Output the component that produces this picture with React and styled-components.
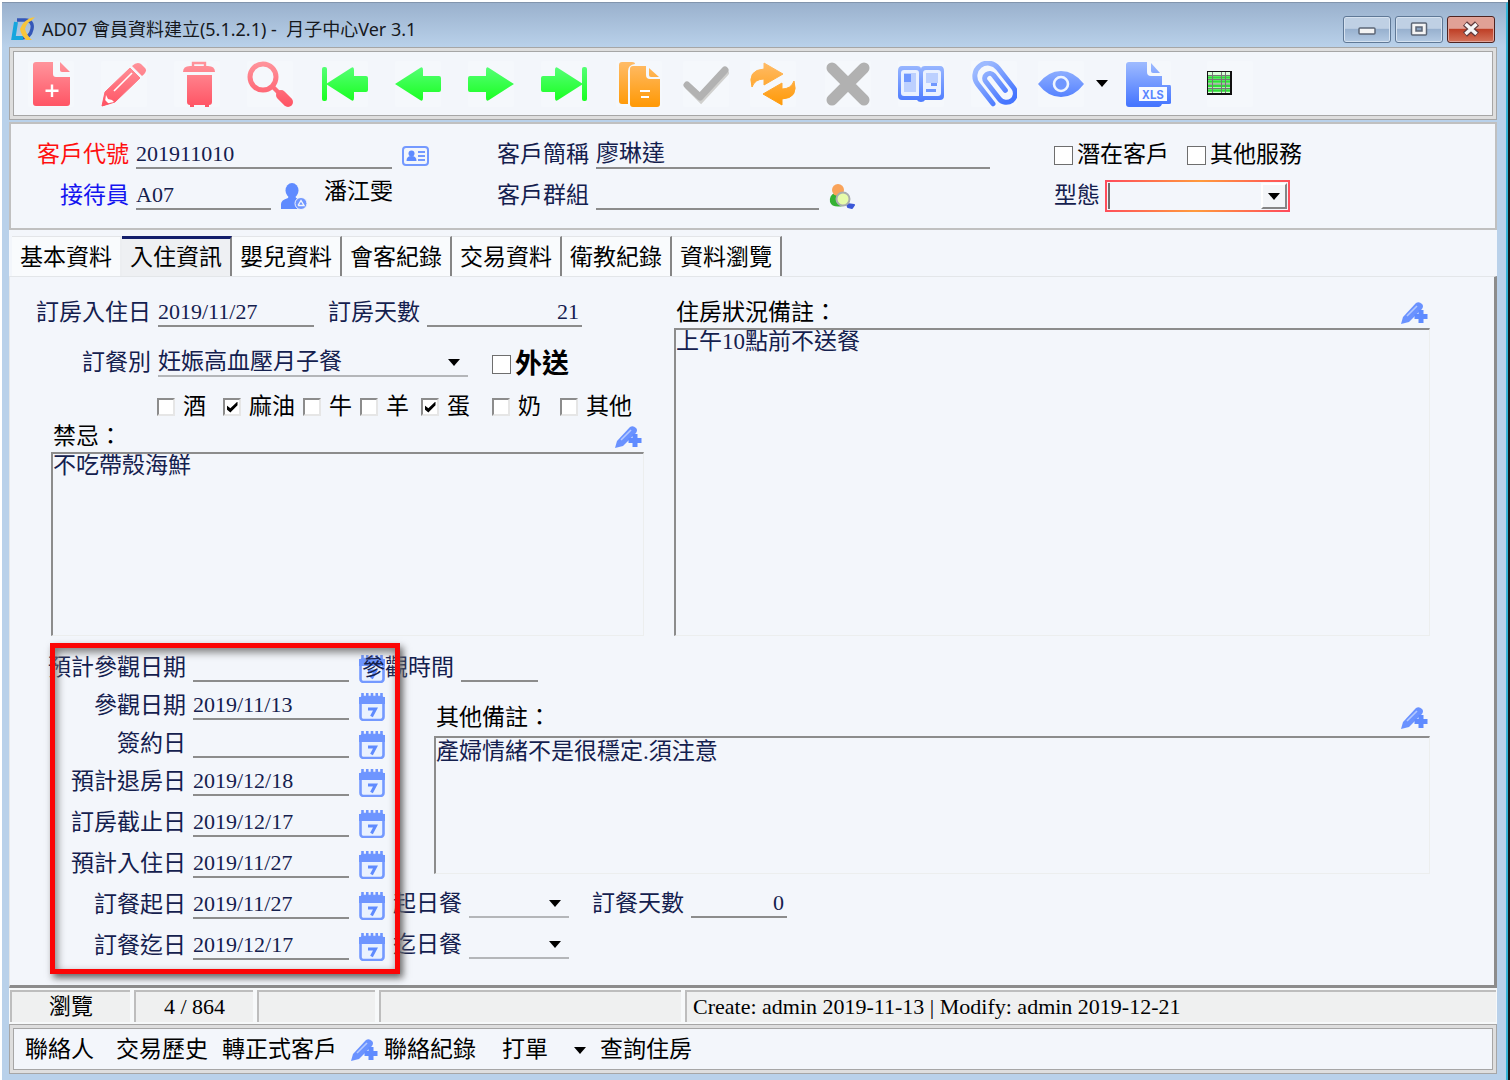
import styled, { createGlobalStyle, css } from "styled-components";

const dates = [
	{ id: "planVisit", label: "預計參觀日期", value: "" },
	{ id: "visit", label: "參觀日期", value: "2019/11/13" },
	{ id: "sign", label: "簽約日", value: "" },
	{ id: "planCheckout", label: "預計退房日", value: "2019/12/18" },
];

const bookingDates = [
	{ id: "roomEnd", label: "訂房截止日", value: "2019/12/17" },
	{ id: "planCheckin", label: "預計入住日", value: "2019/11/27" },
	{ id: "mealStart", label: "訂餐起日", value: "2019/11/27" },
	{ id: "mealEnd", label: "訂餐迄日", value: "2019/12/17" },
];

const tabs = ["基本資料", "入住資訊", "嬰兒資料", "會客紀錄", "交易資料", "衛教紀錄", "資料瀏覽"];

const foods = [
	{ label: "酒" },
	{ label: "麻油", checked: true },
	{ label: "牛" },
	{ label: "羊" },
	{ label: "蛋", checked: true },
	{ label: "奶" },
	{ label: "其他" },
];

export default function App() {
	return (
		<>
			<GlobalStyle />
			<GradientDefs />
			<Desktop>
				<Window>
					<TitleBar>
						<Logo />
						<Title>AD07 會員資料建立(5.1.2.1) -&nbsp; 月子中心Ver 3.1</Title>
						<WindowButtons>
							<WindowButton aria-label="minimize">
								<svg width="20" height="14" viewBox="0 0 20 14">
									<rect x="2" y="6" width="16" height="6" rx="1" fill="#f4f4f4" stroke="#5c6675" strokeWidth="1.5" />
								</svg>
							</WindowButton>
							<WindowButton aria-label="maximize">
								<svg width="20" height="16" viewBox="0 0 20 16">
									<rect x="2.500" y="2" width="15" height="12" rx="1" fill="#f4f4f4" stroke="#5c6675" strokeWidth="1.5" />
									<rect x="7" y="6" width="6" height="4" fill="#8ba3c0" stroke="#5c6675" strokeWidth="1.5" />
								</svg>
							</WindowButton>
							<WindowButton aria-label="close" $danger>
								<svg width="20" height="16" viewBox="0 0 20 16">
									<path d="M4 2.500L16 13.500M16 2.500L4 13.500" stroke="#5f3a3c" strokeWidth="6" />
									<path d="M4.500 3L15.500 13M15.500 3L4.500 13" stroke="#f6f6f6" strokeWidth="3.6" />
								</svg>
							</WindowButton>
						</WindowButtons>
					</TitleBar>

					<Toolbar>
						<ToolGroup>
							<Tool name="new"><FileAddIcon /></Tool>
							<Tool name="edit"><PencilIcon /></Tool>
							<Tool name="delete"><TrashIcon /></Tool>
							<Tool name="search"><SearchIcon /></Tool>
						</ToolGroup>
						<ToolGroup>
							<Tool name="first"><ArrowIcon bar /></Tool>
							<Tool name="previous"><ArrowIcon /></Tool>
							<Tool name="next"><ArrowIcon flip /></Tool>
							<Tool name="last"><ArrowIcon bar flip /></Tool>
						</ToolGroup>
						<ToolGroup $gap={21}>
							<Tool name="copy"><CopyIcon /></Tool>
							<Tool name="save"><CheckIcon /></Tool>
							<Tool name="refresh"><RefreshIcon /></Tool>
						</ToolGroup>
						<ToolGroup $gap={21}>
							<ToolGroup>
								<Tool name="cancel"><CrossIcon /></Tool>
								<Tool name="browse"><BookIcon /></Tool>
								<Tool name="attachment"><ClipIcon /></Tool>
							</ToolGroup>
							<SplitTool>
								<Tool name="view"><EyeIcon /></Tool>
								<CaretButton aria-label="view options"><Caret /></CaretButton>
							</SplitTool>
						</ToolGroup>
						<ToolGroup $gap={36}>
							<Tool name="export xls"><XlsIcon /></Tool>
							<Tool name="sheet"><SheetIcon /></Tool>
						</ToolGroup>
					</Toolbar>

					<Header>
						<HeaderColumn>
							<Row>
								<Label htmlFor="code" $width={118} $color="#ff1010">客戶代號</Label>
								<Field id="code" $width={256} defaultValue="201911010" />
								<IconButton aria-label="customer card"><CardIcon /></IconButton>
							</Row>
							<Row>
								<Label htmlFor="staff" $width={118} $color="#1414f0">接待員</Label>
								<Field id="staff" $width={135} defaultValue="A07" />
								<IconButton aria-label="pick staff"><UserIcon /></IconButton>
								<StaffName>潘江雯</StaffName>
							</Row>
						</HeaderColumn>
						<HeaderColumn>
							<Row>
								<Label htmlFor="short">客戶簡稱</Label>
								<Field id="short" $width={394} $cjk defaultValue="廖琳達" />
							</Row>
							<Row>
								<Label htmlFor="group">客戶群組</Label>
								<Field id="group" $width={223} $cjk defaultValue="" />
								<IconButton aria-label="pick group"><GroupIcon /></IconButton>
							</Row>
						</HeaderColumn>
						<HeaderColumn>
							<CheckRow>
								<CheckLabel><Check type="checkbox" />潛在客戶</CheckLabel>
								<CheckLabel><Check type="checkbox" />其他服務</CheckLabel>
							</CheckRow>
							<Row>
								<Label htmlFor="type">型態</Label>
								<TypeBox>
									<TypeSelect id="type"><option> </option></TypeSelect>
									<TypeArrow><Caret /></TypeArrow>
								</TypeBox>
							</Row>
						</HeaderColumn>
					</Header>

					<TabBar role="tablist">
						{tabs.map((tab) => (
							<Tab key={tab} role="tab" aria-selected={tab === "入住資訊"}>{tab}</Tab>
						))}
					</TabBar>

					<TabPage>
						<Upper>
							<RoomColumn>
								<Row>
									<Label htmlFor="roomStart" $width={141}>訂房入住日</Label>
									<Field id="roomStart" $width={156} defaultValue="2019/11/27" />
									<NextLabel htmlFor="roomDays">訂房天數</NextLabel>
									<Field id="roomDays" $width={155} $right defaultValue="21" />
								</Row>
								<MealRow>
									<Label htmlFor="meal" $width={141}>訂餐別</Label>
									<SelectBox $width={310}>
										<Select id="meal"><option>妊娠高血壓月子餐</option></Select>
										<SelectCaret><Caret /></SelectCaret>
									</SelectBox>
									<DeliveryLabel><Check type="checkbox" />外送</DeliveryLabel>
								</MealRow>
								<FoodRow>
									{foods.map((food) => (
										<FoodLabel key={food.label}>
											<SunkenCheck type="checkbox" defaultChecked={food.checked} />
											{food.label}
										</FoodLabel>
									))}
								</FoodRow>
								<TabooNote>
									<Note id="taboo" label="禁忌：" text="不吃帶殼海鮮" />
								</TabooNote>
							</RoomColumn>
							<Note id="roomNote" label="住房狀況備註：" text="上午10點前不送餐" />
						</Upper>

						<Lower>
							<DateColumn>
								<DateGroup $gap={8}>
									{dates.map((d) => <DateRow key={d.id} {...d} />)}
								</DateGroup>
								<DateGroup $gap={11}>
									{bookingDates.map((d) => <DateRow key={d.id} {...d} />)}
								</DateGroup>
							</DateColumn>
							<OtherColumn>
								<VisitRow>
									<Label htmlFor="visitTime">參觀時間</Label>
									<Field id="visitTime" $width={77} defaultValue="" />
								</VisitRow>
								<OtherNote>
									<Note id="otherNote" label="其他備註：" text="產婦情緒不是很穩定.須注意" />
								</OtherNote>
								<MealDays>
									<Row>
										<Label htmlFor="startMeal">起日餐</Label>
										<SelectBox $width={100}>
											<Select id="startMeal"><option> </option></Select>
											<SelectCaret><Caret /></SelectCaret>
										</SelectBox>
										<MealDaysLabel htmlFor="mealDays">訂餐天數</MealDaysLabel>
										<Field id="mealDays" $width={96} $right defaultValue="0" />
									</Row>
									<Row>
										<Label htmlFor="endMeal">迄日餐</Label>
										<SelectBox $width={100}>
											<Select id="endMeal"><option> </option></Select>
											<SelectCaret><Caret /></SelectCaret>
										</SelectBox>
									</Row>
								</MealDays>
							</OtherColumn>
						</Lower>
					</TabPage>

					<StatusBar>
						<StatusCell $center>瀏覽</StatusCell>
						<StatusCell $center>4 / 864</StatusCell>
						<StatusCell />
						<StatusCell />
						<StatusCell>Create: admin 2019-11-13 | Modify: admin 2019-12-21</StatusCell>
					</StatusBar>

					<ActionBar>
						<Action>聯絡人</Action>
						<Action $space={8}>交易歷史</Action>
						<Action>轉正式客戶</Action>
						<Action><PenPlusIcon />聯絡紀錄</Action>
						<Action $space={12}>打單</Action>
						<CaretButton aria-label="print options" $space={12}><Caret /></CaretButton>
						<Action>查詢住房</Action>
					</ActionBar>
				</Window>
			</Desktop>
		</>
	);
}

function Tool({ name, children }) {
	return (
		<ToolButton aria-label={name}>
			<svg width="46" height="46" viewBox="0 0 46 46" fill="none">{children}</svg>
		</ToolButton>
	);
}

function DateRow({ id, label, value }) {
	return (
		<Row>
			<Label htmlFor={id} $width={138}>{label}</Label>
			<Field id={id} $width={156} defaultValue={value} />
			<IconButton aria-label={`${label} calendar`}><CalendarIcon /></IconButton>
		</Row>
	);
}

function Note({ id, label, text }) {
	return (
		<NoteBox>
			<NoteHead>
				<label htmlFor={id}>{label}</label>
				<NoteButton aria-label={`edit ${label}`}><PenPlusIcon /></NoteButton>
			</NoteHead>
			<NoteText id={id} defaultValue={text} />
		</NoteBox>
	);
}

function Caret() {
	return (
		<svg width="12" height="7" viewBox="0 0 12 7">
			<path d="M0 0H12L6 7Z" fill="#000" />
		</svg>
	);
}

/* gradients shared by all toolbar icons, in the icon's own 46px box */
function GradientDefs() {
	const list = [
		["gRed", "#ff939b", "#ff5666"],
		["gGreen", "#5cff80", "#12ff16"],
		["gOrange", "#ffbb66", "#ff9a08"],
		["gBlue", "#9dbaff", "#4676ff"],
	];
	return (
		<HiddenSvg width="0" height="0" aria-hidden="true">
			<defs>
				{list.map(([id, from, to]) => (
					<linearGradient key={id} id={id} gradientUnits="userSpaceOnUse" x1="0" y1="2" x2="0" y2="44">
						<stop offset="0" stopColor={from} />
						<stop offset="1" stopColor={to} />
					</linearGradient>
				))}
			</defs>
		</HiddenSvg>
	);
}

function Logo() {
	return (
		<svg width="25" height="24" viewBox="0 0 25 24" fill="none">
			<path d="M6 3H14C20 3 22 7 21 12C20 17 17 21 11 21" stroke="#3457b8" strokeWidth="3.400" />
			<path d="M5 5L2.500 21H12" stroke="#16a6de" strokeWidth="4" />
			<path d="M11 8C14 4 17 1 24 0L20 4C17 5 15 8 14 12Q16 19 21 23H15Q10 18 9 12Z" fill="#f7c53c" />
		</svg>
	);
}

function FileAddIcon() {
	return (
		<>
			<path d="M8 1H25V13Q25 16 28 16H42V42Q42 45 39 45H8Q5 45 5 42V4Q5 1 8 1Z" fill="url(#gRed)" />
			<path d="M32 1L42 11H34Q32 11 32 9Z" fill="url(#gRed)" />
			<path d="M24 23.500V36M17.500 29.800H30.500" stroke="#fff" strokeWidth="2.400" />
		</>
	);
}

function PencilIcon() {
	return (
		<>
			<path d="M1 45L4 31L29 7L39 17L14 41Z" fill="url(#gRed)" strokeLinejoin="round" stroke="url(#gRed)" />
			<path d="M31 5Q36 0 40 3L44 7Q47 10 41 15Z" fill="url(#gRed)" />
			<path d="M13 30L31 12" stroke="#fff" strokeWidth="1.600" />
			<path d="M5 34L7 38L11 39L13 41L6 42.500L4 40.500Z" fill="#fff" />
			<path d="M1 45L3 38L8 43Z" fill="#ff5666" />
		</>
	);
}

function TrashIcon() {
	return (
		<>
			<path d="M19 6V2H31V6" stroke="url(#gRed)" strokeWidth="2.400" />
			<path d="M9 11Q9 5 16 5H34Q41 5 41 11Z" fill="url(#gRed)" />
			<path d="M13 14H38V41Q38 44 35 44V46H31V44H20V46H16V44Q13 44 13 41Z" fill="url(#gRed)" />
		</>
	);
}

function SearchIcon() {
	return (
		<>
			<circle cx="16" cy="16" r="13" stroke="url(#gRed)" strokeWidth="5" />
			<path d="M25 25L33 33" stroke="url(#gRed)" strokeWidth="4.500" />
			<path d="M34 34L41 41" stroke="url(#gRed)" strokeWidth="10" strokeLinecap="round" />
		</>
	);
}

function ArrowIcon({ bar, flip }) {
	return (
		<g transform={flip ? "translate(46 0) scale(-1 1)" : undefined}>
			{bar && <rect x="0" y="6" width="5" height="34" rx="2" fill="url(#gGreen)" />}
			<path
				d={bar
					? "M4 23L29 7Q32 5 32 9V15H44Q46 15 46 17V29Q46 31 44 31H32V37Q32 41 29 39Z"
					: "M0 23L25 7Q28 5 28 9V15H44Q46 15 46 17V29Q46 31 44 31H28V37Q28 41 25 39Z"}
				fill="url(#gGreen)"
			/>
		</g>
	);
}

function CopyIcon() {
	return (
		<>
			<path d="M6 1H16Q19 1 19 3Q12 4 12 10V43H6Q3 43 3 40V4Q3 1 6 1Z" fill="url(#gOrange)" />
			<path d="M17 5H30V14Q30 18 34 18H44V43Q44 46 41 46H17Q14 46 14 43V8Q14 5 17 5Z" fill="url(#gOrange)" />
			<path d="M33 7L43 16H35Q33 16 33 14Z" fill="url(#gOrange)" />
			<path d="M24 30H34M25 36H33" stroke="#fff" strokeWidth="2" />
		</>
	);
}

function CheckIcon() {
	return (
		<>
			<path d="M5 26L18 39L43 12" stroke="#d0d0ce" strokeWidth="6" strokeLinecap="round" />
			<path d="M4 24L17 36L42 9" stroke="#b2b2b2" strokeWidth="7" strokeLinecap="round" strokeLinejoin="round" />
		</>
	);
}

function RefreshIcon() {
	return (
		<>
			<path d="M14 2L33 13L14 24V18Q5 18 2 26Q-3 9 14 8Z" fill="url(#gOrange)" stroke="url(#gOrange)" strokeLinejoin="round" />
			<path d="M32 44L13 33L32 22V28Q41 28 44 20Q49 37 32 38Z" fill="url(#gOrange)" stroke="url(#gOrange)" strokeLinejoin="round" />
		</>
	);
}

function CrossIcon() {
	return <path d="M7 7L39 39M39 7L7 39" stroke="#b1b1b1" strokeWidth="11" strokeLinecap="round" />;
}

function BookIcon() {
	return (
		<>
			<path d="M4 5H19Q23 5 23 8Q23 5 27 5H42Q46 5 46 10V35Q46 39 42 39H27Q26 41 23 41Q20 41 19 39H4Q0 39 0 35V10Q0 5 4 5Z" fill="url(#gBlue)" />
			<path d="M6 9H18Q21 9 21 12V35H6Q3 35 3 32V12Q3 9 6 9ZM28 9H40Q43 9 43 12V32Q43 35 40 35H25V12Q25 9 28 9Z" fill="#eaf1ff" />
			<path d="M6 12H18V31H6ZM28 12H40V22H28Z" fill="#bcd0ff" />
			<path d="M6 13H13V21H6ZM33 22H39V25H33ZM28 28H38V31H28Z" fill="#6f97ff" />
		</>
	);
}

function ClipIcon() {
	return (
		<path
			d="M10 38V13A13 13 0 0 1 36 13V38A9 9 0 0 1 18 38V16A5 5 0 0 1 28 16V35"
			transform="rotate(-38 23 23)"
			stroke="url(#gBlue)"
			strokeWidth="5"
			strokeLinecap="round"
		/>
	);
}

function EyeIcon() {
	return (
		<>
			<path d="M0 23Q10 10 23 10T46 23Q36 36 23 36T0 23Z" fill="url(#gBlue)" />
			<circle cx="23" cy="23" r="7" fill="#6f96ff" stroke="#eef4ff" strokeWidth="2.600" />
		</>
	);
}

function XlsIcon() {
	return (
		<>
			<path d="M4 1H22V11Q22 15 26 15H37V24H45Q46 24 46 26V42Q46 43 44 43H37Q36 46 34 46H4Q1 46 1 43V4Q1 1 4 1Z" fill="url(#gBlue)" />
			<path d="M26 2L35 12H28Q26 12 26 10Z" fill="url(#gBlue)" />
			<rect x="14" y="26" width="28" height="14" fill="#f8fbff" />
			<text x="28" y="38" textAnchor="middle" fontFamily="'Liberation Mono', monospace" fontWeight="700" fontSize="12" fill="#5a86ff">XLS</text>
		</>
	);
}

function SheetIcon() {
	return (
		<>
			<rect x="0" y="10" width="25" height="24" fill="#111" />
			<rect x="1" y="11" width="22" height="21" fill="#d9ffd9" />
			<path d="M1 16.500H23M1 20.500H23M1 25H23M1 29.500H23" stroke="#2ede38" strokeWidth="2.400" />
			<path d="M1 14.500H23M1 18.500H23M1 23H23M1 27.500H23M5.500 11V32M14.500 11V32M18.500 11V32" stroke="#777" />
		</>
	);
}

function CardIcon() {
	return (
		<svg width="27" height="20" viewBox="0 0 27 20" fill="none">
			<rect x="1" y="1" width="25" height="18" rx="3" stroke="#7499ff" strokeWidth="2" />
			<circle cx="9.500" cy="7.500" r="3" fill="#5f8bff" />
			<path d="M4.500 15Q4.500 10 9.500 10T14.500 15Z" fill="#5f8bff" />
			<path d="M16 6H23M16 10H23M16 14H23" stroke="#7499ff" strokeWidth="1.800" />
		</svg>
	);
}

function UserIcon() {
	return (
		<svg width="27" height="27" viewBox="0 0 27 27" fill="none">
			<ellipse cx="11" cy="7.500" rx="6.500" ry="7.500" fill="#5f8bff" />
			<path d="M0 26V21Q0 17 7 15L8 12H14L15 15Q22 17 22 21V26Z" fill="#5f8bff" />
			<circle cx="20" cy="20.500" r="6" fill="#6f96ff" stroke="#f3f6fb" />
			<path d="M17 22.500L20 17.500L23 22.500H17" stroke="#f3f6fb" strokeWidth="1.400" />
		</svg>
	);
}

function GroupIcon() {
	return (
		<svg width="27" height="27" viewBox="0 0 27 27" fill="none">
			<path d="M1 19Q0 12 6 10H13L14 23Q3 25 1 19Z" fill="#34b233" />
			<circle cx="9" cy="7" r="6" fill="#f9a35a" />
			<path d="M18 21L25 22L23 25L19 24Z" fill="#3b57d8" stroke="#3b57d8" strokeWidth="2" strokeLinejoin="round" />
			<circle cx="14" cy="16" r="6.500" fill="#e6fbaa" stroke="#a9aeae" strokeWidth="2" />
		</svg>
	);
}

function CalendarIcon() {
	return (
		<svg width="27" height="28" viewBox="0 0 27 28" fill="none">
			<rect x="1.500" y="4" width="23" height="23" rx="3" fill="#e9f1ff" stroke="#7499ff" strokeWidth="2.600" />
			<path d="M0 4H26V11H0Z" fill="#6e95ff" />
			<path d="M3.500 0V5M8.250 0V5M13 0V5M17.750 0V5M22.500 0V5" stroke="#6e95ff" strokeWidth="2.600" />
			<path d="M9 16H16.500L12.500 23.500" stroke="#5f8bff" strokeWidth="3" />
		</svg>
	);
}

function PenPlusIcon() {
	return (
		<svg width="27" height="24" viewBox="0 0 27 24" fill="none">
			<path d="M0 23L2 16L15 2Q18 0 21 3Q23 5 21 8L8 21Z" fill="#6a92ff" />
			<path d="M6 15L16 5" stroke="#b4c9ff" strokeWidth="1.600" />
			<path d="M20 9V22M13.500 15.500H26.500" stroke="#5f8bff" strokeWidth="5" />
		</svg>
	);
}

const GlobalStyle = createGlobalStyle`
	* {
		box-sizing: border-box;
	}
	body {
		margin: 0;
		background: #b9d1ea;
	}
	body, button, input, select, textarea {
		font-family: "Liberation Serif", "Noto Sans CJK TC", serif;
		font-size: 23px;
		line-height: 30px;
		color: #000;
	}
	button {
		border: 0;
		padding: 0;
		background: none;
	}
	svg {
		display: block;
		flex: none;
	}
`;

const HiddenSvg = styled.svg`
	position: absolute;
`;

const Desktop = styled.div`
	background: #fff;
	padding: 2px 0 0 2px;
	border-right: 2px solid #14181c;
`;

const Window = styled.div`
	display: flex;
	flex-direction: column;
	min-height: calc(100vh - 2px);
	padding: 0 9px 6px 7px;
	border-top: 1px solid #8295ad;
	border-right: 2px solid #35b4d6;
	background: #b9d1ea linear-gradient(#9ab1cd, #b9d1ea) top / 100% 44px no-repeat;
`;

const TitleBar = styled.div`
	display: flex;
	align-items: center;
	gap: 6px;
	height: 44px;
	padding: 8px 2px 0;
`;

const Title = styled.div`
	flex: 1;
	font-family: "Noto Sans", "Noto Sans CJK TC", sans-serif;
	font-size: 18px;
	color: #16181c;
	white-space: nowrap;
`;

const WindowButtons = styled.div`
	display: flex;
	gap: 4px;
`;

const WindowButton = styled.button`
	display: flex;
	align-items: center;
	justify-content: center;
	width: 48px;
	height: 27px;
	border: 1px solid #5f7896;
	border-radius: 3px;
	box-shadow: inset 0 0 0 1px #d6e2f0;
	background: linear-gradient(#bfd0e4 45%, #98b1cf 50%, #b4cae3);
	${({ $danger }) => $danger && css`
		border-color: #4f2320;
		box-shadow: inset 0 0 0 1px #e2a59b;
		background: linear-gradient(#e0a196 45%, #bf4027 50%, #d4745c);
	`}
`;

const doubleFrame = css`
	border: 1px solid #a6a6a6;
	box-shadow: inset 0 0 0 3px #dedede, inset 0 0 0 4px #a6a6a6;
	background: #f3f6fb;
`;

const Toolbar = styled.div`
	display: flex;
	align-items: center;
	gap: 29px;
	height: 73px;
	padding: 0 18px;
	${doubleFrame}
`;

const ToolGroup = styled.div`
	display: flex;
	align-items: center;
	gap: ${({ $gap }) => $gap || 27}px;
`;

const SplitTool = styled.div`
	display: flex;
	align-items: center;
	gap: 12px;
	margin-right: -12px;
`;

const ToolButton = styled.button`
	width: 46px;
	height: 46px;
	border-radius: 2px;
	background: #f5f8fc;
`;

const CaretButton = styled.button`
	display: flex;
	align-items: center;
	justify-content: center;
	width: 12px;
	height: 24px;
	margin-left: ${({ $space }) => $space || 0}px;
`;

const Header = styled.div`
	display: grid;
	grid-template-columns: 486fr 557fr 441fr;
	margin-top: 2px;
	padding: 15px 0 18px;
	border: 2px solid #c0c0c0;
	background: #f3f6fb;
`;

const HeaderColumn = styled.div`
	display: flex;
	flex-direction: column;
	gap: 11px;
`;

const Row = styled.div`
	display: flex;
	align-items: center;
	height: 30px;
	white-space: nowrap;
`;

const Label = styled.label`
	width: ${({ $width }) => ($width ? `${$width}px` : "auto")};
	margin-right: 7px;
	padding-top: 2px;
	text-align: right;
	color: ${({ $color }) => $color || "#14204e"};
`;

const Field = styled.input`
	width: ${({ $width }) => $width}px;
	height: 30px;
	padding: 2px 3px 0 0;
	border: 0;
	border-bottom: 2px solid #8c8c8c;
	border-radius: 0;
	outline: 0;
	background: none;
	font-size: ${({ $cjk }) => ($cjk ? 23 : 22)}px;
	color: #14204e;
	text-align: ${({ $right }) => ($right ? "right" : "left")};
`;

const IconButton = styled.button`
	margin-left: 10px;
	padding-top: 3px;
`;

const NoteButton = styled.button`
	flex: none;
`;

const StaffName = styled.span`
	margin: 0 0 6px 16px;
`;

const CheckRow = styled.div`
	display: flex;
	gap: 18px;
	height: 30px;
	padding-top: 2px;
`;

const CheckLabel = styled.label`
	display: flex;
	align-items: center;
	gap: 4px;
	white-space: nowrap;
`;

const Check = styled.input`
	appearance: none;
	display: flex;
	align-items: center;
	justify-content: center;
	width: 19px;
	height: 19px;
	margin: 0;
	border: 1px solid #6e6e6e;
	background: #fff;
	&:checked::after {
		content: "";
		width: 11px;
		height: 11px;
		background: #000;
		clip-path: polygon(0 35%, 35% 62%, 100% 0, 100% 35%, 35% 100%, 0 70%);
	}
`;

const SunkenCheck = styled(Check)`
	width: 18px;
	height: 18px;
	border: 2px solid #8c8c8c;
	border-right-color: #e6e6e6;
	border-bottom-color: #e6e6e6;
`;

const TypeBox = styled.div`
	display: flex;
	flex: none;
	width: 185px;
	height: 32px;
	margin: 2px 0 0 -2px;
	padding: 1px;
	border: 2px solid transparent;
	background:
		linear-gradient(#f3f6fb, #f3f6fb) padding-box,
		linear-gradient(100deg, #ff4a5c, #ff9a3c 50%, #ff4a5c) border-box;
`;

const TypeSelect = styled.select`
	flex: 1;
	min-width: 0;
	appearance: none;
	border: 0;
	border-left: 2px solid #6e6e6e;
	border-radius: 0;
	outline: 0;
	background: none;
`;

const TypeArrow = styled.span`
	display: flex;
	align-items: center;
	justify-content: center;
	width: 26px;
	border: 2px solid #fff;
	border-right: 2px solid #858585;
	border-bottom: 2px solid #858585;
	background: #f3f5f8;
	pointer-events: none;
`;

const TabBar = styled.div`
	display: flex;
	height: 46px;
	padding: 6px 0 0 3px;
	background: #f3f6fb;
`;

const Tab = styled.button`
	width: 110px;
	padding: 2px 0 0 8px;
	border-top: 1px solid #e3e5e8;
	border-right: 2px solid #858585;
	background: #f9fbfd;
	text-align: left;
	white-space: nowrap;
	&:first-child {
		border-right-color: #eceef1;
	}
	&[aria-selected="true"] {
		border-top: 3px solid #141f6c;
		padding-top: 0;
		background: #eef0f3;
	}
`;

const TabPage = styled.div`
	flex: 1;
	padding: 20px 64px 10px 0;
	border: 1px solid #e3e6e9;
	border-right: 3px solid #8c8c8c;
	border-bottom: 3px solid #8c8c8c;
	background: #f3f6fb;
`;

const Upper = styled.div`
	display: grid;
	grid-template-columns: 634px 1fr;
	column-gap: 30px;
`;

const RoomColumn = styled.div`
	display: flex;
	flex-direction: column;
`;

const NextLabel = styled(Label)`
	margin-left: 14px;
`;

const MealRow = styled(Row)`
	margin-top: 20px;
`;

const SelectBox = styled.div`
	position: relative;
	width: ${({ $width }) => $width}px;
`;

const Select = styled.select`
	display: block;
	width: 100%;
	height: 30px;
	appearance: none;
	padding: 0;
	border: 0;
	border-bottom: 2px solid #b4b6b9;
	border-radius: 0;
	outline: 0;
	background: none;
	color: #14204e;
`;

const SelectCaret = styled.span`
	position: absolute;
	top: 12px;
	right: 8px;
	pointer-events: none;
`;

const DeliveryLabel = styled(CheckLabel)`
	margin-left: 24px;
	padding-top: 4px;
	font-size: 27px;
	font-weight: 700;
`;

const FoodRow = styled.div`
	display: grid;
	grid-template-columns: 66px 80px 57px 61px 71px 68px auto;
	height: 24px;
	margin: 15px 0 5px 147px;
`;

const FoodLabel = styled.label`
	display: flex;
	align-items: center;
	gap: 8px;
	white-space: nowrap;
`;

const TabooNote = styled.div`
	padding-left: 41px;
`;

const NoteBox = styled.div`
	display: flex;
	flex-direction: column;
	height: 100%;
`;

const NoteHead = styled.div`
	display: flex;
	align-items: center;
	justify-content: space-between;
	height: 31px;
	padding: 0 2px;
`;

const NoteText = styled.textarea`
	flex: 1;
	min-height: 184px;
	padding: 0;
	border: 1px solid #eceeee;
	border-top: 2px solid #8c8c8c;
	border-left: 2px solid #8c8c8c;
	border-radius: 0;
	outline: 0;
	resize: none;
	background: none;
	line-height: 24px;
	color: #14204e;
`;

const Lower = styled.div`
	display: flex;
	margin-top: 16px;
	padding-left: 38px;
`;

const DateColumn = styled.div`
	position: relative;
	flex: none;
	display: flex;
	flex-direction: column;
	gap: 11px;
	width: 345px;
	/* red marker frame round the date fields */
	&::after {
		content: "";
		position: absolute;
		z-index: 1;
		inset: -9px -7px -14px 2px;
		border: 5px solid #fb0505;
		box-shadow: 3px 4px 7px #666, inset 2px 4px 8px #777;
		pointer-events: none;
	}
`;

const DateGroup = styled.div`
	display: flex;
	flex-direction: column;
	gap: ${({ $gap }) => $gap}px;
`;

const OtherColumn = styled.div`
	flex: 1;
	display: flex;
	flex-direction: column;
`;

const VisitRow = styled(Row)`
	position: relative;
	margin-left: -31px;
`;

const OtherNote = styled.div`
	margin-top: 20px;
	padding-left: 41px;
	${NoteBox} {
		gap: 3px;
	}
	${NoteText} {
		min-height: 138px;
		padding-top: 2px;
	}
`;

const MealDays = styled.div`
	display: flex;
	flex-direction: column;
	gap: 11px;
	margin-top: 14px;
`;

const MealDaysLabel = styled(Label)`
	margin-left: 23px;
`;

const StatusBar = styled.div`
	display: grid;
	grid-template-columns: 120px 119px 118px 302px 1fr;
	gap: 4px;
	height: 36px;
	padding: 2px 1px;
	background: #f7f9fa;
`;

const StatusCell = styled.div`
	padding-left: ${({ $center }) => ($center ? 0 : 6)}px;
	border-top: 2px solid #bdbdbd;
	border-left: 2px solid #bdbdbd;
	background: #eff0f0;
	font-size: 22px;
	text-align: ${({ $center }) => ($center ? "center" : "left")};
	white-space: nowrap;
`;

const ActionBar = styled.div`
	display: flex;
	align-items: center;
	gap: 14px;
	height: 50px;
	padding: 2px 15px 0;
	${doubleFrame}
`;

const Action = styled.button`
	display: flex;
	align-items: center;
	gap: 6px;
	margin-left: ${({ $space }) => $space || 0}px;
	white-space: nowrap;
`;
